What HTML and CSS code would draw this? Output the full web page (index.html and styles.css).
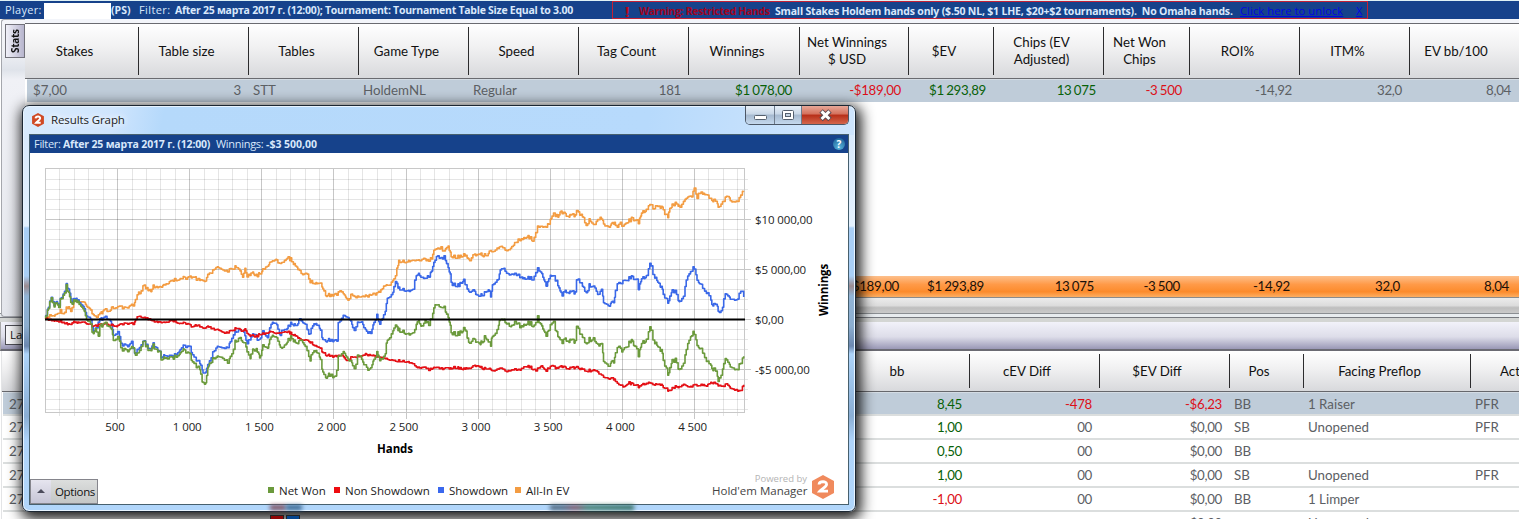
FILE: index.html
```html
<!DOCTYPE html>
<html lang="ru">
<head>
    <meta charset="UTF-8">
    <meta name="viewport" content="width=device-width, initial-scale=1.0">
    <title>Results Graph</title>
    <link rel="stylesheet" href="styles.css">
</head>
<body>
    <div class="topbar">
        <span class="player">Player:</span>
        <span class="player-name"></span>
        <b class="site">(PS)</b>
        <span class="filter-label">Filter:</span>
        <b class="filter-text">After 25 марта 2017 г. (12:00); Tournament: Tournament Table Size Equal to 3.00</b>
        <div class="warning">
            <b class="mark">!</b>
            <b class="warning-title">Warning: Restricted Hands</b>
            <b class="warning-text">Small Stakes Holdem hands only ($.50 NL, $1 LHE, $20+$2 tournaments).&nbsp; No Omaha hands.</b>
            <a class="unlock" href="#">Click here to unlock</a>
            <a class="close-warning" href="#">X</a>
        </div>
    </div>

    <div class="upper">
        <div class="rail"><div class="stats-tab">Stats</div></div>
        <div class="report">
            <div class="report-row report-head">
                <div>Stakes</div>
                <div>Table size</div>
                <div>Tables</div>
                <div>Game Type</div>
                <div>Speed</div>
                <div>Tag Count</div>
                <div>Winnings</div>
                <div>Net Winnings<br>$ USD</div>
                <div>$EV</div>
                <div>Chips (EV<br>Adjusted)</div>
                <div>Net Won<br>Chips</div>
                <div>ROI%</div>
                <div>ITM%</div>
                <div>EV bb/100</div>
            </div>
            <div class="report-row report-line">
                <div class="left first">$7,00</div>
                <div>3</div>
                <div class="left">STT</div>
                <div class="left">HoldemNL</div>
                <div class="left">Regular</div>
                <div>181</div>
                <div class="plus">$1 078,00</div>
                <div class="minus">-$189,00</div>
                <div class="plus">$1 293,89</div>
                <div class="plus">13 075</div>
                <div class="minus">-3 500</div>
                <div>-14,92</div>
                <div>32,0</div>
                <div>8,04</div>
            </div>
            <div class="report-space"></div>
            <div class="report-row report-total">
                <div></div><div></div><div></div><div></div><div></div><div></div><div></div>
                <div>-$189,00</div>
                <div>$1 293,89</div>
                <div>13 075</div>
                <div>-3 500</div>
                <div>-14,92</div>
                <div>32,0</div>
                <div>8,04</div>
            </div>
            <div class="scrollbar"></div>
        </div>
    </div>

    <div class="splitter"></div>
    <div class="toolbar"><div class="last-btn">Last</div></div>

    <div class="hands">
        <div class="hand-row hand-head">
            <div></div><div>bb</div><div>cEV Diff</div><div>$EV Diff</div><div>Pos</div><div>Facing Preflop</div><div>Act</div>
        </div>
        <div class="hand-row selected">
            <div class="left date">27</div><div class="plus">8,45</div><div class="minus">-478</div><div class="minus">-$6,23</div>
            <div class="left">BB</div><div class="left">1 Raiser</div><div class="left">PFR</div>
        </div>
        <div class="hand-row">
            <div class="left date">27</div><div class="plus">1,00</div><div>00</div><div>$0,00</div>
            <div class="left">SB</div><div class="left">Unopened</div><div class="left">PFR</div>
        </div>
        <div class="hand-row">
            <div class="left date">27</div><div class="plus">0,50</div><div>00</div><div>$0,00</div>
            <div class="left">BB</div><div></div><div></div>
        </div>
        <div class="hand-row">
            <div class="left date">27</div><div class="plus">1,00</div><div>00</div><div>$0,00</div>
            <div class="left">SB</div><div class="left">Unopened</div><div class="left">PFR</div>
        </div>
        <div class="hand-row">
            <div class="left date">27</div><div class="minus">-1,00</div><div>00</div><div>$0,00</div>
            <div class="left">BB</div><div class="left">1 Limper</div><div></div>
        </div>
        <div class="hand-row">
            <div></div><div></div><div></div><div>$0,00</div>
            <div></div><div class="left">Unopened</div><div></div>
        </div>
    </div>

    <div class="window">
        <div class="titlebar">
            <svg class="logo" width="14" height="14" viewBox="0 0 24 26">
                <path d="M12 0 L23 6 V20 L12 26 L1 20 V6 Z" fill="#d04a25"/>
                <path d="M7.5 10 C8 5.5 16.5 5.5 16 10 C15.7 13 11 15 8.5 18 H17" fill="none" stroke="#fff" stroke-width="3.6"/>
            </svg>
            <span class="title">Results Graph</span>
            <div class="buttons">
                <div class="btn">
                    <svg width="28" height="18"><rect x="8.5" y="9.5" width="12" height="4" rx="1" fill="#fff" stroke="#55606e"/></svg>
                </div>
                <div class="btn">
                    <svg width="26" height="18"><rect x="7.5" y="4.5" width="11" height="9" rx="1" fill="#fff" stroke="#55606e"/><rect x="10.5" y="7.5" width="5" height="3" fill="#c5d4e4" stroke="#55606e"/></svg>
                </div>
                <div class="btn btn-close">
                    <svg width="46" height="18"><path d="M19 5 L28 13.4 M28 5 L19 13.4" stroke="#5b4a52" stroke-width="5"/><path d="M19.6 5.4 L27.4 13 M27.4 5.4 L19.6 13" stroke="#fff" stroke-width="3"/></svg>
                </div>
            </div>
        </div>
        <div class="client">
            <div class="filter-bar">
                <span class="fb-label">Filter:</span>
                <b class="fb-date">After 25 марта 2017 г. (12:00)</b>
                <span class="fb-win">Winnings:</span>
                <b class="fb-sum">-$3 500,00</b>
                <span class="help">?</span>
            </div>
            <svg id="chart" class="chart" width="818" height="321" viewBox="30 153 818 321"></svg>
            <div class="footer">
                <div class="options"><span class="arrow"></span><span class="options-text">Options</span></div>
                <div class="legend">
                    <span class="key net"></span><span class="k1">Net Won</span>
                    <span class="key non"></span><span class="k2">Non Showdown</span>
                    <span class="key show"></span><span class="k3">Showdown</span>
                    <span class="key ev"></span><span class="k4">All-In EV</span>
                </div>
                <div class="powered">
                    <div class="powered-by">Powered by</div>
                    <div class="powered-name">Hold'em Manager</div>
                </div>
                <svg class="brand" width="24" height="26" viewBox="0 0 24 26">
                    <path d="M12 1 L23 7 V19 L12 25 L1 19 V7 Z" fill="#f08a5d"/>
                    <path d="M8 10.5 C8.3 6.8 16 6.8 15.6 10.5 C15.3 13 11 14.5 8.8 17.2 H17" fill="none" stroke="#fff" stroke-width="2.8"/>
                </svg>
            </div>
        </div>
        <div class="smudge smudge-red"></div>
        <div class="smudge smudge-blue"></div>
        <div class="smudge smudge-green"></div>
    </div>
    <div class="card card-red"></div>
    <div class="card card-blue"></div>

    <script src="script.js"></script>
</body>
</html>
```

FILE: styles.css
```css
* {
    box-sizing: border-box;
}

html {
    overflow: hidden;
}

body {
    margin: 0;
    width: 1519px;
    height: 519px;
    position: relative;
    overflow: hidden;
    background: #fff;
    font-family: Lato, "Noto Sans", sans-serif;
    font-size: 13.3px;
    color: #5c6064;
    white-space: nowrap;
}

/* top filter bar */
.topbar {
    display: flex;
    height: 19px;
    padding-left: 5px;
    border-top: 1px solid #dff1f5;
    background: #16428b;
    color: #d9e8fb;
    font-family: "Open Sans", "Noto Sans", sans-serif;
    font-size: 11px;
    line-height: 18px;
}

.player {
    width: 39px;
    letter-spacing: 0.3px;
}

.player-name {
    width: 67px;
    height: 16px;
    margin-top: 2px;
    background: #fff;
}

.site {
    width: 28px;
    font-size: 10.5px;
}

.filter-label {
    width: 36px;
    letter-spacing: 0.4px;
}

.filter-text {
    width: 437px;
    font-size: 10.5px;
    letter-spacing: -0.26px;
}

.warning {
    display: flex;
    width: 756px;
    border: 1px solid #c32035;
    line-height: 18px;
}

.mark {
    width: 26px;
    padding-left: 12px;
    color: #c00418;
    font-size: 15px;
}

.warning-title {
    width: 136px;
    color: #a00522;
    font-size: 10.5px;
    letter-spacing: -0.35px;
}

.warning-text {
    width: 465px;
    font-size: 10.5px;
    letter-spacing: -0.19px;
}

.unlock,
.close-warning {
    color: #0505e0;
    text-decoration: underline;
}

.unlock {
    width: 116px;
    letter-spacing: 0.15px;
}

/* report */
.upper {
    display: flex;
    height: 294px;
    padding-left: 1px;
    background: #fff;
}

.rail {
    width: 24px;
    padding: 4px 0 0 3px;
    height: 298px;
    border: 1px solid #a5a7ad;
    border-right: none;
    border-radius: 3px 0 0 3px;
    background: linear-gradient(#f4f5f9 0, #f1f2f6 30px, #dfe3ea 50px, #f0f1f6 60px, #e4e6ec);
}

.stats-tab {
    width: 20px;
    height: 34px;
    border: 1px solid #72727a;
    background: linear-gradient(90deg, #b7b5cd, #f0f0f8);
    transform: rotate(180deg);
    writing-mode: vertical-rl;
    color: #111;
    font-family: "Open Sans", sans-serif;
    font-size: 10px;
    font-weight: 700;
    letter-spacing: -0.3px;
    line-height: 18px;
    text-align: center;
}

.report {
    display: flex;
    flex: 1;
    flex-direction: column;
    padding-top: 4px;
    background: linear-gradient(#f3f5fa 4px, #fff 4px);
}

.report-row {
    display: grid;
    grid-template-columns: 114px 110px 110px 110px 110px 110px 111px 109px 85px 110px 86px 110px 110px 109px;
    flex-shrink: 0;
}

.report-head {
    height: 56px;
    border-top: 1px solid #6a6b70;
    border-bottom: 1px solid #6a6b70;
    background: linear-gradient(#fff, #f0f0f1 45%, #d8d9dc);
}

.report-head div,
.hand-head div {
    display: flex;
    align-items: center;
    justify-content: center;
    margin: 3px 0;
    padding-right: 14px;
    border-right: 1px solid #2c2c2e;
    color: #111;
    line-height: 17px;
    text-align: center;
}

.report-head div:last-child {
    padding-right: 17px;
    border: none;
}

.report-line {
    height: 23px;
    margin-left: 2px;
    border-top: 1px solid #d4dce4;
    background: #bfccd9;
    line-height: 21px;
    text-align: right;
}

.report-line div,
.report-total div,
.hand-row > div {
    letter-spacing: -0.3px;
    word-spacing: -0.8px;
}

.report-line div {
    position: relative;
    left: -3px;
    padding: 0 7px 0 5px;
}

.report-line .first {
    padding-left: 9px;
}

.report-row .left,
.hand-row .left,
.hand-head > div {
    text-align: left;
    letter-spacing: 0;
    word-spacing: 0;
}

.plus {
    color: #086108;
}

.minus {
    color: #dc1018;
}

.report-space {
    flex: 1;
}

.report-total {
    height: 21px;
    background: linear-gradient(#fdc08c, #ff9a48 40%, #fc8b2c 75%, #fdae62);
    color: #1a1008;
    line-height: 21px;
    text-align: right;
}

.report-total div {
    padding-right: 10px;
}

.scrollbar {
    height: 16px;
    border-top: 1px solid #8b8b8b;
    background: linear-gradient(#ececec, #dcdcdc 50%, #bebebe 65%, #cbcbcb);
}

.splitter {
    height: 9px;
    border-top: 1px solid #8b8f93;
    background: linear-gradient(#e8ecef 0, #e8ecef 3px, #777a80 3px, #777a80 4px, #d4d6d4 4px);
}

.toolbar {
    height: 29px;
    padding: 3px 0 0 4px;
    border-left: 1px solid #aaa;
    border-bottom: 2px solid #6b6b73;
    background: linear-gradient(#f2f2fa, #dddde9 55%, #9a98b6);
}

.last-btn {
    width: 60px;
    height: 20px;
    padding-left: 4px;
    border: 1px solid #4e4e55;
    background: #f8f8fa;
    color: #111;
    font: 11.5px/18px "Open Sans", sans-serif;
}

/* hands list */
.hands {
    margin-left: 1px;
    border-left: 1px solid #e3e4e6;
}

.hand-row {
    display: grid;
    grid-template-columns: 838px 130px 130px 130px 74px 167px 47px;
    height: 24px;
    margin-left: 1px;
    border-bottom: 2px solid #dbdede;
    line-height: 22px;
    text-align: right;
}

.hand-row > div {
    position: relative;
    left: -2px;
    padding: 0 7px 0 5px;
}

.hand-row .date {
    padding-left: 8px;
}

.hand-head {
    height: 41px;
    margin-left: 0;
    border-bottom: 1px solid #66676c;
    background: linear-gradient(#fff, #f0f0f1 45%, #d8d9dc);
}

.hand-head > div {
    left: 0;
    padding-right: 20px;
}

.hand-head > div:first-child {
    border: none;
}

.hand-head > div:last-child {
    justify-content: flex-start;
    padding: 0 0 0 29px;
    border: none;
}

.selected {
    border-top: 1px solid #d4dce4;
    height: 24px;
    background: #bfccd9;
}

/* results window */
.window {
    position: absolute;
    left: 22px;
    top: 105px;
    width: 834px;
    height: 407px;
    padding: 0 6px;
    border: 1px solid #1c2733;
    border-radius: 7px;
    background: linear-gradient(100deg, #d9ebfd 0, #cfe5fd 90px, #b5d9fb 140px, #b7dafc 75%, #cde4fc 95%) top / 100% 29px no-repeat,
        linear-gradient(#d4e7fb 0, #e4f1fe 120px, #a9cff6 122px, #a9cff6 170px, #9b8b90 180px, #91b4d6 190px, #8caed0 220px, #6c88b0 240px, #add4fa 248px, #8aaed4 310px, #afd4fa 335px, #b1d6fb);
    box-shadow: inset 0 0 0 1px #e8f4ff, 2px 4px 14px 3px rgba(0, 0, 0, 0.9);
    font-family: "Open Sans", "Noto Sans", sans-serif;
    font-size: 11.5px;
    color: #222;
}

.titlebar {
    display: flex;
    height: 28px;
}

.logo {
    margin: 7px 0 0 2px;
}

.title {
    flex: 1;
    padding: 5px 0 0 6px;
    line-height: 18px;
    letter-spacing: -0.1px;
    text-shadow: 0 0 6px #fff, 0 0 8px #fff;
}

.buttons {
    display: flex;
    height: 19px;
    border: 1px solid #4c5766;
    border-top: none;
    border-radius: 0 0 5px 5px;
    overflow: hidden;
}

.btn {
    border-right: 1px solid #6e7c8d;
    background: linear-gradient(#e6eff8, #c8d7e7 45%, #a5b9cf 50%, #c5d9ee);
}

.btn-close {
    border: none;
    background: linear-gradient(#e8a898, #d4705c 45%, #b72e18 50%, #d4664c);
}

.btn svg {
    display: block;
}

.client {
    height: 371px;
    border: 1px solid #47606e;
    background: #fff;
}

.filter-bar {
    display: flex;
    height: 18px;
    padding-left: 4px;
    background: #16428b;
    color: #d9e8fb;
    font-size: 11px;
    line-height: 18px;
}

.fb-label {
    width: 29px;
    letter-spacing: -0.3px;
}

.fb-date {
    width: 153px;
    font-size: 10.5px;
    letter-spacing: -0.18px;
}

.fb-win {
    width: 50px;
    letter-spacing: -0.3px;
}

.fb-sum {
    flex: 1;
    font-size: 10.5px;
}

.help {
    width: 12px;
    height: 12px;
    margin: 3px 3px 0 0;
    border-radius: 50%;
    background: radial-gradient(circle at 50% 80%, #59b5dd, #236a9e 80%);
    color: #fff;
    font-size: 10px;
    font-weight: bold;
    line-height: 12px;
    text-align: center;
}

.chart {
    display: block;
}

.chart text {
    font-size: 11.5px;
    letter-spacing: -0.1px;
    fill: #222;
}

.chart .axis-title {
    font-weight: 700;
    font-size: 11.5px;
    fill: #000;
}

.grid-minor {
    stroke: #000;
    stroke-opacity: 0.1;
}

.grid-major {
    stroke: #000;
    stroke-opacity: 0.22;
}

.frame {
    fill: none;
    stroke: #c8c8c8;
}

.zero {
    stroke: #000;
    stroke-width: 2;
}

.series {
    fill: none;
    stroke-width: 1.6;
    stroke-linejoin: round;
}

.footer {
    display: flex;
    height: 30px;
}

.options {
    display: flex;
    width: 68px;
    height: 25px;
    margin-top: 5px;
    border: 1px solid #85858c;
    background: linear-gradient(#dcdedd, #c4c6c6);
    line-height: 24px;
}

.arrow {
    width: 20px;
    background: linear-gradient(#e6e5ef, #c6c5d6);
}

.arrow::before {
    content: "";
    display: block;
    margin: 9px 0 0 6px;
    width: 0;
    border: 4px solid transparent;
    border-top: none;
    border-bottom-color: #4b4b5b;
}

.options-text {
    padding-left: 4px;
    color: #111;
    letter-spacing: -0.35px;
}

.legend {
    display: flex;
    width: 614px;
    padding-left: 170px;
    line-height: 33px;
}

.key {
    width: 6px;
    height: 6px;
    margin: 13px 5px 0 0;
}

.net { background: #6b9a3c; }
.non { background: #ee0c10; }
.show { background: #3a68ee; }
.ev { background: #f39c42; }

.k1 { width: 55px; }
.k2 { width: 93px; }
.k3 { width: 66px; }
.k4 { width: 60px; }

.powered {
    width: 95px;
    text-align: right;
}

.powered-by {
    color: #b4b4b4;
    font-size: 9.5px;
    line-height: 9px;
}

.powered-name {
    color: #444;
    line-height: 15px;
}

.brand {
    margin: 0 0 0 4px;
}

.smudge {
    position: absolute;
    bottom: 1px;
    height: 5px;
    filter: blur(2px);
}

.smudge-red {
    left: 247px;
    width: 16px;
    background: #7d4c5c;
}

.smudge-blue {
    left: 263px;
    width: 16px;
    background: #34628d;
}

.smudge-green {
    left: 527px;
    width: 84px;
    background: linear-gradient(90deg, #4c6379 15%, #7f4c5c 30%, #3f7b68 45%, #2f6a5c);
}

.card {
    position: absolute;
    top: 515px;
    width: 14px;
    height: 8px;
    border: 1px solid #222;
}

.card-red {
    left: 270px;
    background: #8f0505;
}

.card-blue {
    left: 286px;
    background: #05458f;
}
```

FILE: script.js
```js
const svg = document.getElementById("chart");

function add(tag, attrs, text) {
    const el = document.createElementNS("http://www.w3.org/2000/svg", tag);
    for (const key in attrs) el.setAttribute(key, attrs[key]);
    if (text) el.textContent = text;
    svg.appendChild(el);
}

// Each series is three stretches of the plot: left edge, then x,y pairs in thirds of a pixel
const series = [
    { color: "#f39c42", noise: 1.8, parts: [
        [0, "137,478 150,465 165,465 180,452 190,460 200,440 212,450 225,420 240,425 252,428 265,440 275,455 285,470 297,468 310,450 325,450 350,440 375,447 400,435 410,415 415,390 420,400 427,373 440,385 452,393 460,377 480,380 500,370 520,362 540,353 560,357 575,348 590,358 612,366 625,345 635,335 645,320 662,325 680,332 695,325 710,318 722,335 728,348 735,325 740,347 755,340 768,347 780,340 790,325 815,307 828,293 835,308 850,302"],
        [280, "20,292 35,300 50,325 65,343 80,337 90,365 105,372 125,375 135,403 150,407 170,402 180,388 195,405 203,418 215,405 235,412 250,408 270,405 300,397 310,383 330,372 345,350 350,320 357,303 380,305 400,298 415,300 430,293 440,305 455,295 463,270 482,260 493,275 505,262 515,292 530,290 555,285 568,298 580,287 600,282 620,287 632,272 665,263 685,273 700,252 717,238 740,230 760,240 770,203 790,203 805,195 820,162 835,170"],
        [560, "0,157 20,167 45,165 52,150 60,162 70,175 78,195 90,178 102,198 120,175 135,195 150,198 160,190 172,198 180,180 184,205 195,190 215,177 235,187 243,163 260,145 272,133 280,145 290,137 310,145 315,165 323,170 330,140 347,130 360,143 370,120 385,107 395,107 403,87 410,115 415,97 430,105 440,103 447,118 465,122 477,143 487,123 505,110 515,123 530,125 540,105 551,95"]
    ] },
    { color: "#3a68e8", noise: 1.8, parts: [
        [0, "137,472 143,447 150,422 155,405 160,436 170,422 175,436 185,408 192,396 198,370 207,395 216,424 230,415 240,430 250,442 260,465 270,472 280,515 290,500 300,480 310,472 330,475 340,525 355,515 362,555 385,560 395,548 405,585 415,565 428,540 440,555 450,570 458,550 470,563 480,575 485,600 490,585 520,590 545,560 570,562 580,590 600,612 610,645 625,615 640,570 650,560 680,562 690,548 700,520 715,508 730,510 740,548 755,530 765,520 775,545 790,510 800,535 815,490 828,485"],
        [280, "0,525 5,507 20,505 35,488 50,500 58,480 75,490 88,525 100,490 115,500 130,540 170,542 173,490 190,463 205,470 222,512 230,490 245,485 255,510 272,520 283,485 290,463 298,495 315,460 322,415 338,400 343,370 348,355 355,385 385,393 400,385 405,350 415,340 435,358 450,345 462,310 470,287 487,295 490,280 497,310 510,340 515,375 535,375 550,360 565,392 580,393 595,410 615,398 625,390 632,412 637,370 655,360 660,335 670,325 685,345 700,340 735,355 760,355 770,325 785,345 800,380 808,350 820,350 830,365"],
        [560, "5,408 15,395 45,397 50,360 55,355 70,385 80,398 88,375 103,380 112,410 125,390 130,425 147,435 163,425 168,370 180,360 183,388 188,362 205,358 210,350 230,362 235,385 243,360 260,345 268,320 271,303 276,335 285,352 305,385 315,415 325,428 332,393 347,395 357,430 370,405 380,350 400,322 410,355 430,390 445,405 455,432 470,435 477,460 487,445 492,405 505,410 530,422 538,395 545,390 551,412"]
    ] },
    { color: "#e41016", noise: 1.2, parts: [
        [0, "137,478 180,483 200,490 207,495 215,487 230,487 250,487 265,490 280,497 300,495 320,490 335,497 350,497 375,492 400,492 410,475 417,465 430,473 440,475 460,482 490,487 515,483 540,488 560,492 580,500 590,495 610,507 617,500 650,508 675,518 690,513 712,502 725,512 735,507 745,525 765,530 780,522 805,517 830,518"],
        [280, "15,513 40,523 60,540 80,538 100,555 120,567 135,583 160,590 185,583 200,600 220,590 240,590 255,582 290,590 310,597 340,600 380,605 400,610 410,622 430,620 445,630 470,622 500,627 530,622 550,627 570,622 590,617 610,625 640,630 665,627 683,635 700,627 715,630 735,618 750,622 768,630 785,620 797,632 815,618 830,625"],
        [560, "0,620 20,625 50,622 80,633 100,630 125,648 160,658 190,682 205,668 235,680 260,668 285,673 300,673 325,692 345,680 358,683 370,670 385,680 410,675 440,678 457,667 480,678 500,675 525,690 543,690 551,675"]
    ] },
    { color: "#6b9a3c", noise: 2.3, parts: [
        [0, "137,475 143,450 150,425 155,405 160,440 170,425 175,440 185,410 192,400 198,373 205,400 215,430 230,420 240,435 250,450 260,475 270,485 278,520 288,505 295,535 300,500 310,490 330,495 340,540 355,530 362,570 385,575 400,560 407,595 415,575 428,540 440,560 450,575 458,555 470,568 480,575 485,610 490,592 520,595 545,570 570,585 580,610 600,630 605,670 615,672 625,620 640,590 665,590 685,605 695,580 705,545 718,530 735,550 748,595 760,570 772,570 778,595 790,550 800,565 815,530 828,525"],
        [280, "0,555 5,560 20,545 35,530 50,555 65,540 80,565 90,600 100,570 115,585 125,620 133,650 150,645 168,653 173,590 190,572 205,595 225,628 230,590 240,587 250,610 268,630 280,605 290,575 300,605 315,590 320,545 335,520 348,485 355,510 370,515 385,523 400,515 413,480 425,495 435,485 445,495 455,475 465,435 478,435 485,447 490,427 495,460 508,485 515,523 535,520 555,505 565,545 580,540 600,552 615,530 632,560 635,525 650,515 658,487 670,480 680,490 690,500 705,485 720,498 740,490 765,495 770,465 777,490 800,528 810,500 820,487 830,520"],
        [560, "5,550 15,540 45,543 50,500 53,497 62,525 75,545 80,550 85,540 100,535 110,560 125,555 130,600 145,615 163,605 168,560 180,550 183,590 190,565 205,555 210,540 225,560 235,585 243,555 260,535 268,510 271,495 276,530 285,548 305,575 315,620 325,645 332,605 347,600 357,635 370,605 382,550 398,515 410,550 425,575 437,600 450,620 465,630 475,662 485,640 492,600 505,610 530,632 540,600 543,610 551,590"]
    ] }
];

// Grid: minor lines every 100 hands / $1000, major every 500 / $5000
for (let i = 1; i < 49; i++) {
    const x = Math.round(45 + i * 14.42) + 0.5;
    if (x > 744) break;
    const major = i % 5 === 0;
    add("line", { class: major ? "grid-major" : "grid-minor", x1: x, x2: x, y1: 168, y2: major ? 419 : 416 });
}
for (let i = -9; i <= 14; i++) {
    const y = 319.5 - i * 10;
    const major = i % 5 === 0;
    add("line", { class: major ? "grid-major" : "grid-minor", x1: 45, x2: major ? 751 : 748, y1: y, y2: y });
}
add("rect", { class: "frame", x: 45.5, y: 168.5, width: 699, height: 244 });

series.forEach(s => {
    const pts = [];
    s.parts.forEach(([left, list]) => list.split(" ").forEach(p => {
        const [x, y] = p.split(",").map(Number);
        pts.push([left + x / 3, 160 + y / 3]);
    }));
    let seed = 7;
    const random = () => (seed = (seed * 16807) % 2147483647) / 2147483647;
    let d = `M${pts[0][0]} ${pts[0][1]}`;
    let k = 0;
    for (let x = pts[0][0]; x < 744; x += 0.8 + random()) {
        while (k < pts.length - 2 && pts[k + 1][0] < x) k++;
        const [x0, y0] = pts[k], [x1, y1] = pts[k + 1];
        const y = y0 + (y1 - y0) * Math.min(1, (x - x0) / (x1 - x0)) + (random() * 2 - 1) * s.noise;
        d += `H${x.toFixed(1)}V${y.toFixed(1)}`;
    }
    add("path", { class: "series", d, stroke: s.color });
});

add("line", { class: "zero", x1: 45, x2: 745, y1: 319.5, y2: 319.5 });

["500", "1 000", "1 500", "2 000", "2 500", "3 000", "3 500", "4 000", "4 500"].forEach((t, i) => {
    add("text", { x: 115 + i * 72.2, y: 431, "text-anchor": "middle" }, t);
});
[["$10 000,00", 223.5], ["$5 000,00", 273.5], ["$0,00", 323.5], ["-$5 000,00", 373.5]].forEach(([t, y]) => {
    add("text", { x: 755, y }, t);
});
add("text", { class: "axis-title", x: 395, y: 453, "text-anchor": "middle" }, "Hands");
add("text", { class: "axis-title", x: 0, y: 0, "text-anchor": "middle", transform: "translate(828 290) rotate(-90)" }, "Winnings");
```
